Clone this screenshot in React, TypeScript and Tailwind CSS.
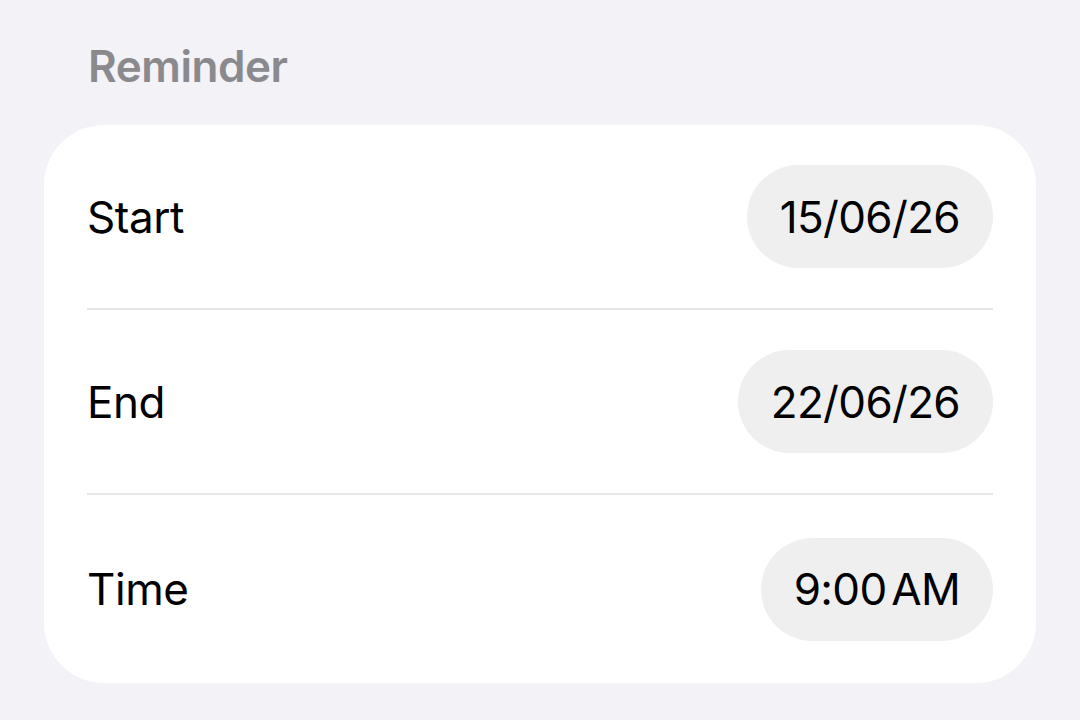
import React from "react";

const rows = [
  { label: "Start", value: "15/06/26" },
  { label: "End", value: "22/06/26" },
  { label: "Time", value: "9:00 AM" },
];

function Row({ label, value, last }: { label: string; value: string; last?: boolean }) {
  return (
    <div className={`flex items-center justify-between ${last ? "h-[188px]" : "h-[183px]"}`}>
      <span className="text-[44px] leading-none text-black tracking-[-0.01em]">{label}</span>
      <span className="flex h-[103px] items-center rounded-full bg-[#efeff0] px-[33px] text-[44px] leading-none text-black tracking-[-0.015em] [word-spacing:-7px]">
        {value}
      </span>
    </div>
  );
}

export default function App() {
  return (
    <div
      className="h-[720px] w-[1080px] overflow-hidden bg-[#f2f2f7] pt-[40px] px-[44px]"
      style={{ fontFamily: "Inter, 'Noto Sans', sans-serif" }}
    >
      {/* Section header */}
      <h2 className="pl-[44px] text-[44px] leading-[52px] font-semibold text-[#8a8a8e] tracking-[-0.01em]">
        Reminder
      </h2>

      {/* Card */}
      <div className="mt-[33px] rounded-[60px] bg-white px-[43px]">
        {rows.map((r, i) => (
          <div key={r.label}>
            {i > 0 && <div className="h-[2px] bg-[#e5e5ea]" />}
            <Row label={r.label} value={r.value} last={i === rows.length - 1} />
          </div>
        ))}
      </div>
    </div>
  );
}
